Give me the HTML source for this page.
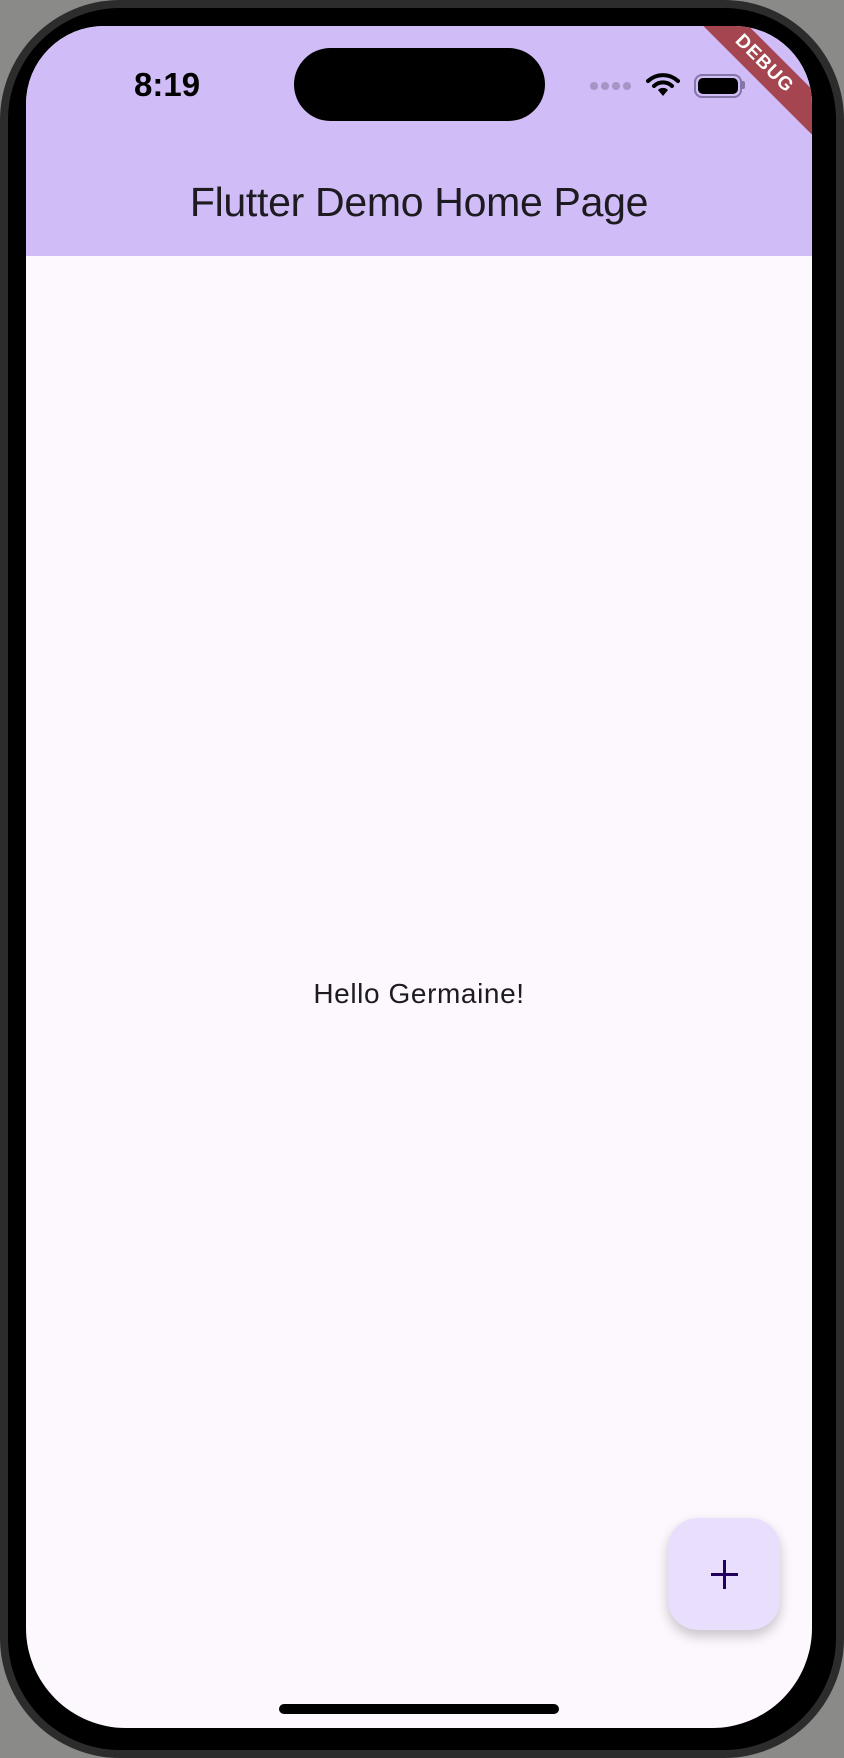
<!DOCTYPE html>
<html><head><meta charset="utf-8"><style>
html,body{margin:0;padding:0;width:844px;height:1758px;overflow:hidden;background:#8a8a88;}
.phone{position:absolute;left:0;top:0;width:844px;height:1758px;background:#2c2c2c;border-radius:120px;}
.bezel{position:absolute;left:8px;top:8px;width:828px;height:1742px;background:#000;border-radius:112px;}
.screen{position:absolute;left:26px;top:26px;width:786px;height:1702px;background:#fdf8fe;border-radius:78px 78px 100px 100px;overflow:hidden;}
.appbar{position:absolute;left:0;top:0;width:786px;height:230px;background:#d0bcf6;}
.island{position:absolute;left:268px;top:22px;width:251px;height:73px;background:#000;border-radius:37px;}
.time{position:absolute;left:108px;top:40px;font:600 33px "Liberation Sans",sans-serif;color:#000;}
.title{position:absolute;left:0;width:786px;top:153px;text-align:center;font:41px "Liberation Sans",sans-serif;color:#1d1b20;letter-spacing:-0.3px;}
.hello{position:absolute;left:0;width:786px;top:952px;text-align:center;font:28px "Liberation Sans",sans-serif;color:#1d1b20;letter-spacing:0.6px;}
.fab{position:absolute;left:642px;top:1492px;width:112px;height:112px;background:#e9defc;border-radius:30px;box-shadow:0 6px 12px rgba(0,0,0,.22);}
.home{position:absolute;left:253px;top:1678px;width:280px;height:10px;background:#000;border-radius:5px;}
.banner{position:absolute;left:648px;top:22px;width:180px;height:32px;background:#a4454f;transform:rotate(45deg);color:#fff;font:bold 19px "Liberation Sans",sans-serif;text-align:center;line-height:32px;letter-spacing:1px;}
.dots span{position:absolute;top:56px;width:8px;height:8px;border-radius:4px;background:#a694c4;}
</style></head><body>
<div class="phone"><div class="bezel"></div></div>
<div class="screen">
 <div class="appbar"></div>
 <div class="island"></div>
 <div class="time">8:19</div>
 <div class="dots"><span style="left:564px"></span><span style="left:575px"></span><span style="left:586px"></span><span style="left:597px"></span></div>
 <svg style="position:absolute;left:620px;top:46px" width="34" height="26" viewBox="0 0 34 26">
  <path d="M2 9 A22 22 0 0 1 32 9" fill="none" stroke="#000" stroke-width="4" stroke-linecap="round"/>
  <path d="M8 14 A13 13 0 0 1 26 14" fill="none" stroke="#000" stroke-width="4" stroke-linecap="round"/>
  <path d="M12 18 L17 24 L22 18 A7 7 0 0 0 12 18Z" fill="#000"/>
 </svg>
 <div style="position:absolute;left:668px;top:48px;width:44px;height:20px;border:2px solid #8576a8;border-radius:8px;"></div>
 <div style="position:absolute;left:672px;top:52px;width:40px;height:16px;background:#000;border-radius:5px;"></div>
 <div style="position:absolute;left:716px;top:55px;width:3px;height:8px;background:#8576a8;border-radius:0 2px 2px 0;"></div>
 <div class="banner">DEBUG</div>
 <div class="title">Flutter Demo Home Page</div>
 <div class="hello">Hello Germaine!</div>
 <div class="fab"><div style="position:absolute;left:43px;top:55px;width:27px;height:3px;background:#21005d"></div><div style="position:absolute;left:55px;top:42px;width:3px;height:29px;background:#21005d"></div></div>
 <div class="home"></div>
</div>
</body></html>
